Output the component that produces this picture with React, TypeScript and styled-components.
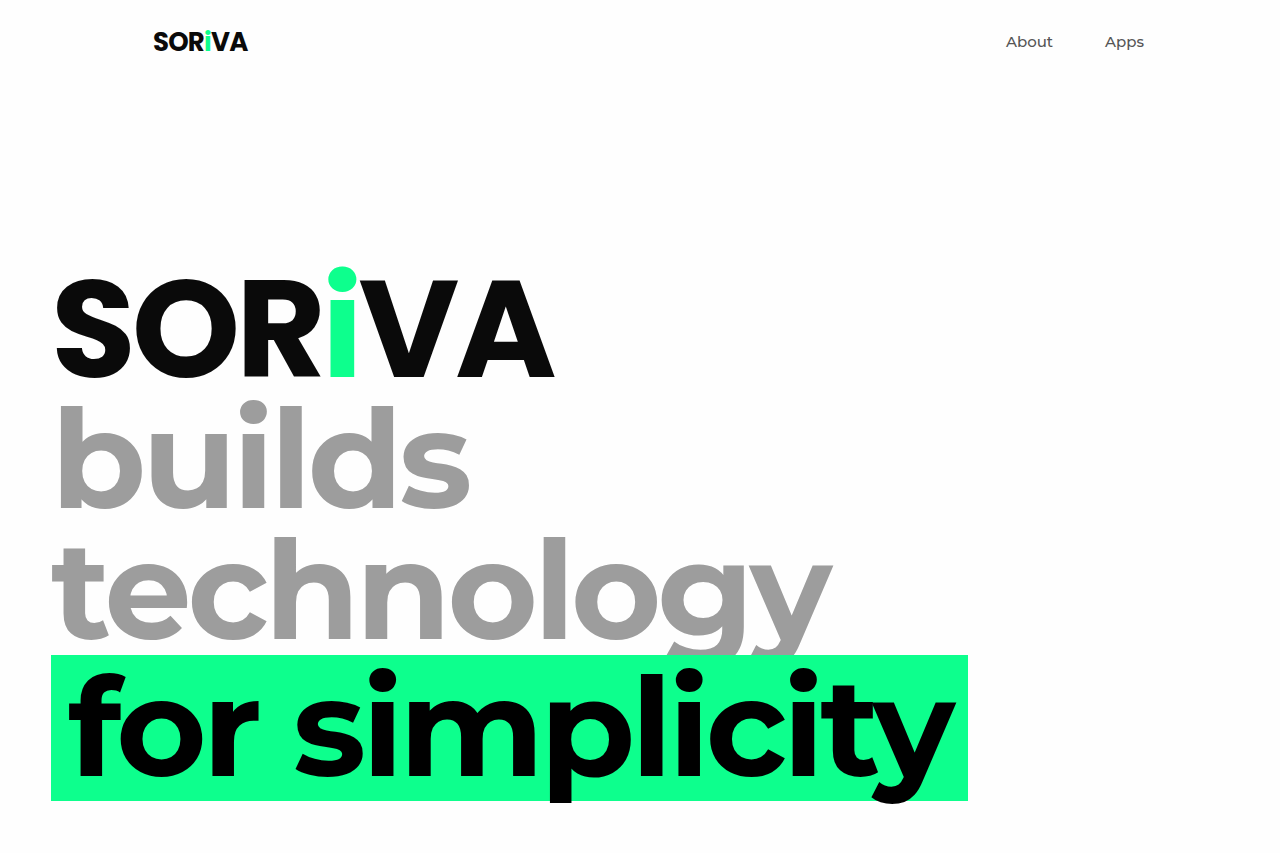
import React from "react";
import styled, { createGlobalStyle } from "styled-components";

const GlobalStyle = createGlobalStyle`
  *, *::before, *::after { box-sizing: border-box; }
  body {
    margin: 0;
    background: #fefefe;
    color: #0a0a0a;
    font-family: Montserrat, Inter, "Liberation Sans", sans-serif;
  }
`;

const Header = styled.header`
  display: flex;
  align-items: center;
  justify-content: space-between;
  padding: 24px 136px 24px 153px;
`;

const HomeLink = styled.a`
  color: inherit;
  text-decoration: none;
`;

const Wordmark = styled.span<{ $size: number; $line: number }>`
  display: block;
  font-family: Poppins, Inter, "Liberation Sans", sans-serif;
  font-size: ${({ $size }) => $size}px;
  line-height: ${({ $line }) => $line}px;
  font-weight: 700;
  letter-spacing: -0.03em;
  color: #0a0a0a;
`;

const Accent = styled.span`
  color: #0dff8d;
`;

const Nav = styled.nav`
  display: flex;
  gap: 52px;
`;

const NavLink = styled.a`
  font-size: 15px;
  line-height: 24px;
  font-weight: 500;
  color: #555;
  text-decoration: none;
`;

const Hero = styled.main`
  padding: 180px 51px 52px;
`;

const Headline = styled.h1`
  display: flex;
  flex-direction: column;
  align-items: flex-start;
  margin: 0;
  font-size: 138px;
  line-height: 131px;
  font-weight: 700;
  letter-spacing: -0.03em;
  white-space: nowrap;
`;

const Line = styled.span`
  color: #9d9d9d;
`;

const Highlight = styled.span`
  padding: 0 17px 2px;
  line-height: 144px;
  background: #0dff8d;
  color: #000;
`;

function Brand({ size, line }: { size: number; line: number }) {
  return (
    <Wordmark $size={size} $line={line}>
      SOR<Accent>i</Accent>VA
    </Wordmark>
  );
}

export default function App() {
  return (
    <>
      <GlobalStyle />
      <Header>
        <HomeLink href="#home">
          <Brand size={26} line={36} />
        </HomeLink>
        <Nav>
          <NavLink href="#about">About</NavLink>
          <NavLink href="#apps">Apps</NavLink>
        </Nav>
      </Header>
      <Hero>
        <Headline>
          <Brand size={138} line={129} />
          <Line>builds</Line>
          <Line>technology</Line>
          <Highlight>for simplicity</Highlight>
        </Headline>
      </Hero>
    </>
  );
}
